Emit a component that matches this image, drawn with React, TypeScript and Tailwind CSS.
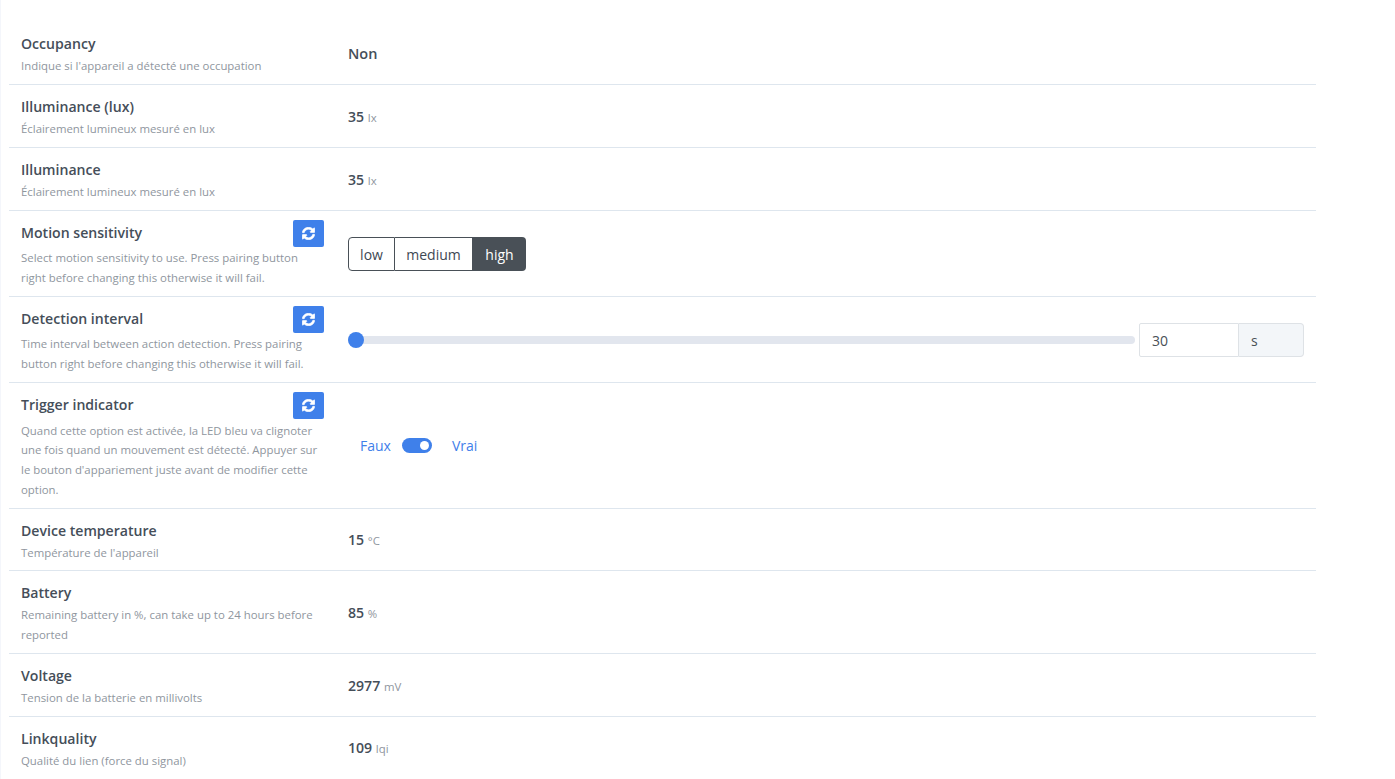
import { ReactNode } from "react";

function RefreshButton() {
  return (
    <button className="flex h-[27px] w-[31px] shrink-0 items-center justify-center rounded-[2px] bg-[#3f80ea] text-white">
      <svg viewBox="0 0 512 512" className="h-[13px] w-[13px]" fill="currentColor" stroke="currentColor" strokeWidth="24">
        <path d="M370.72 133.28C339.458 104.008 298.888 87.962 255.848 88c-77.458.068-144.328 53.178-162.791 126.85-1.344 5.363-6.122 9.15-11.651 9.15H24.103c-7.498 0-13.194-6.807-11.807-14.176C33.933 94.924 134.813 8 256 8c66.448 0 126.791 26.136 171.315 68.685L463.03 40.97C478.149 25.851 504 36.559 504 57.941V192c0 13.255-10.745 24-24 24H345.941c-21.382 0-32.09-25.851-16.971-40.971l41.75-41.749zM32 296h134.059c21.382 0 32.09 25.851 16.971 40.971l-41.75 41.75c31.262 29.273 71.835 45.319 114.876 45.28 77.418-.07 144.315-53.144 162.787-126.849 1.344-5.363 6.122-9.15 11.651-9.15h57.304c7.498 0 13.194 6.807 11.807 14.176C478.067 417.076 377.187 504 256 504c-66.448 0-126.791-26.136-171.315-68.685L48.97 471.03C33.851 486.149 8 475.441 8 454.059V320c0-13.255 10.745-24 24-24z" />
      </svg>
    </button>
  );
}

interface RowProps {
  title: string;
  description: ReactNode;
  refresh?: boolean;
  children: ReactNode;
}

function Row({ title, description, refresh, children }: RowProps) {
  return (
    <div className="flex border-b border-[#dee6ee] last:border-b-0">
      <div className="w-[327px] shrink-0 pl-3 pr-[12px]">
        {refresh ? (
          <div className="flex items-start justify-between pt-[9px]">
            <div className="text-[14.1px] font-semibold leading-[26px] text-[#454e59]">{title}</div>
            <RefreshButton />
          </div>
        ) : (
          <div className="pb-px pt-[10px] text-[14.1px] font-semibold leading-[23px] text-[#454e59]">{title}</div>
        )}
        <div className={`${refresh ? "pt-[1.7px]" : ""} pb-[8.1px] pr-[6px] text-[11.4px] leading-[19.7px] text-[#8f969e]`}>
          {description}
        </div>
      </div>
      <div className="flex min-w-0 flex-1 items-center pl-3 pr-3">{children}</div>
    </div>
  );
}

function Reading({ value, unit }: { value: string; unit: string }) {
  return (
    <div className="pt-px text-[14.1px] font-semibold text-[#454e59]">
      {value} <span className="text-[11.4px] font-normal text-[#8f969e]">{unit}</span>
    </div>
  );
}

export default function App() {
  return (
    <div className="min-h-[779px] overflow-hidden border-l border-[#f4f6fb] bg-white pt-[22.2px] font-['Open_Sans','Noto_Sans',sans-serif]">
      <div className="ml-[8px] w-[1307px]">
        <Row title="Occupancy" description="Indique si l'appareil a détecté une occupation">
          <div className="pt-[2px] text-[14.5px] font-semibold text-[#454e59]">Non</div>
        </Row>
        <Row title="Illuminance (lux)" description="Éclairement lumineux mesuré en lux">
          <Reading value="35" unit="lx" />
        </Row>
        <Row title="Illuminance" description="Éclairement lumineux mesuré en lux">
          <Reading value="35" unit="lx" />
        </Row>
        <Row
          title="Motion sensitivity"
          refresh
          description="Select motion sensitivity to use. Press pairing button right before changing this otherwise it will fail."
        >
          <div className="mt-[2px] flex h-[34px] text-[14px] text-[#3e4853]">
            <div className="flex w-[47px] items-center justify-center rounded-l-[4px] border border-[#495057]">low</div>
            <div className="flex w-[78px] items-center justify-center border-y border-r border-[#495057]">medium</div>
            <div className="flex w-[53px] items-center justify-center rounded-r-[4px] bg-[#495057] text-white">high</div>
          </div>
        </Row>
        <Row
          title="Detection interval"
          refresh
          description="Time interval between action detection. Press pairing button right before changing this otherwise it will fail."
        >
          <div className="mt-[2px] flex w-full items-center">
            <div className="relative h-2 flex-1 rounded-full bg-[#e2e6ee]">
              <div className="absolute left-0 top-1/2 h-4 w-4 -translate-y-1/2 rounded-full bg-[#3f80ea]" />
            </div>
            <div className="ml-1 flex h-[34px] w-[165px] text-[14px] text-[#495057]">
              <div className="flex w-[100px] items-center rounded-l-[2px] border border-[#dee2e6] pl-3">30</div>
              <div className="flex flex-1 items-center rounded-r-[4px] border-y border-r border-[#dee2e6] bg-[#f3f6f9] pl-3">s</div>
            </div>
          </div>
        </Row>
        <Row
          title="Trigger indicator"
          refresh
          description="Quand cette option est activée, la LED bleu va clignoter une fois quand un mouvement est détecté. Appuyer sur le bouton d'appariement juste avant de modifier cette option."
        >
          <div className="flex items-center pl-3 text-[14px] text-[#3f80ea]">
            <span>Faux</span>
            <div className="ml-[11px] flex h-[15px] w-[30px] items-center justify-end rounded-full bg-[#3f80ea] pr-[3px]">
              <div className="h-[9px] w-[9px] rounded-full bg-white" />
            </div>
            <span className="ml-5">Vrai</span>
          </div>
        </Row>
        <Row title="Device temperature" description="Température de l'appareil">
          <Reading value="15" unit="°C" />
        </Row>
        <Row title="Battery" description="Remaining battery in %, can take up to 24 hours before reported">
          <Reading value="85" unit="%" />
        </Row>
        <Row title="Voltage" description="Tension de la batterie en millivolts">
          <Reading value="2977" unit="mV" />
        </Row>
        <Row title="Linkquality" description="Qualité du lien (force du signal)">
          <Reading value="109" unit="lqi" />
        </Row>
      </div>
    </div>
  );
}
